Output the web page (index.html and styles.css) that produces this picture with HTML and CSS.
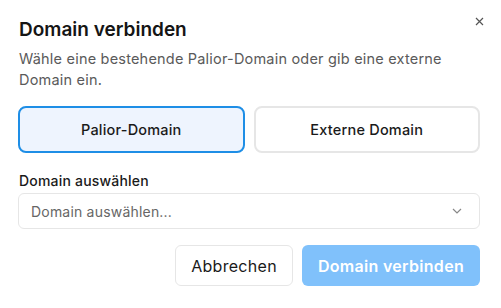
FILE: index.html
```html
<!DOCTYPE html>
<html lang="de">
<head>
  <meta charset="UTF-8">
  <meta name="viewport" content="width=device-width, initial-scale=1.0">
  <title>Domain verbinden</title>
  <link rel="stylesheet" href="styles.css">
</head>
<body>

  <div class="dialog">
    <div class="dialog-head">
      <h2>Domain verbinden</h2>
      <button class="close-btn" aria-label="Schließen">
        <svg width="9" height="9" viewBox="0 0 9 9"><path d="M1 1L8 8M8 1L1 8" stroke="#555" stroke-width="1.2" fill="none"/></svg>
      </button>
    </div>
    <p class="subtitle">Wähle eine bestehende Palior-Domain oder gib eine externe Domain ein.</p>

    <div class="choice-row">
      <button class="choice active">Palior-Domain</button>
      <button class="choice">Externe Domain</button>
    </div>

    <label class="field-label" for="domainSelect">Domain auswählen</label>
    <div class="select" id="domainSelect">
      <span class="placeholder">Domain auswählen...</span>
      <svg width="10" height="6" viewBox="0 0 10 6"><path d="M1 1L5 5L9 1" stroke="#888" stroke-width="1.2" fill="none"/></svg>
    </div>

    <div class="actions">
      <button class="cancel-btn">Abbrechen</button>
      <button class="submit-btn" disabled>Domain verbinden</button>
    </div>
  </div>

</body>
</html>
```

FILE: styles.css
```css
body {
  margin: 0;
  font-family: 'Inter', sans-serif;
  letter-spacing: 0.2px;
  background: white;
  color: #1a1a1a;
}
.dialog {
  padding: 15px 21px 0 19px;
}
.dialog-head {
  display: flex;
  justify-content: space-between;
  align-items: flex-start;
}
h2 {
  margin: 0;
  font-size: 19px;
  font-weight: 600;
  line-height: 30px;
  letter-spacing: 0;
  color: #151515;
}
.close-btn {
  border: none;
  background: none;
  padding: 0;
  margin: 2px -4px 0 0;
  cursor: pointer;
  display: flex;
}
.subtitle {
  margin: 3px 0 0;
  font-size: 14.5px;
  line-height: 21px;
  color: #5a5a5a;
}
.choice-row {
  display: grid;
  grid-template-columns: 1fr 1fr;
  gap: 9px;
  margin: 16px 0 0 -1px;
}
.choice {
  height: 47px;
  border: 2px solid #e6e6e6;
  border-radius: 8px;
  background: white;
  font-family: inherit;
  font-size: 14.5px;
  font-weight: 500;
  letter-spacing: 0.2px;
  color: #1a1a1a;
  cursor: pointer;
}
.choice.active {
  border-color: #1e8ee6;
  background: #eef4fe;
}
.field-label {
  display: block;
  margin-top: 18px;
  font-size: 14px;
  font-weight: 500;
  line-height: 20px;
  color: #1a1a1a;
}
.select {
  display: flex;
  justify-content: space-between;
  align-items: center;
  height: 34px;
  margin: 2px 0 0 -1px;
  padding: 0 17px 0 12px;
  border: 1px solid #e6e6e6;
  border-radius: 6px;
}
.placeholder {
  font-size: 14px;
  color: #666;
}
.actions {
  display: flex;
  justify-content: flex-end;
  gap: 9px;
  margin-top: 16px;
}
button.cancel-btn, button.submit-btn {
  height: 41px;
  border-radius: 6px;
  font-family: inherit;
  font-size: 16px;
  letter-spacing: 0.3px;
  cursor: pointer;
}
.cancel-btn {
  padding: 0 15px;
  border: 1px solid #e6e6e6;
  background: white;
  color: #1a1a1a;
}
.submit-btn {
  padding: 0 16px;
  border: none;
  background: #80c1fb;
  color: white;
  font-weight: 600;
}
```
